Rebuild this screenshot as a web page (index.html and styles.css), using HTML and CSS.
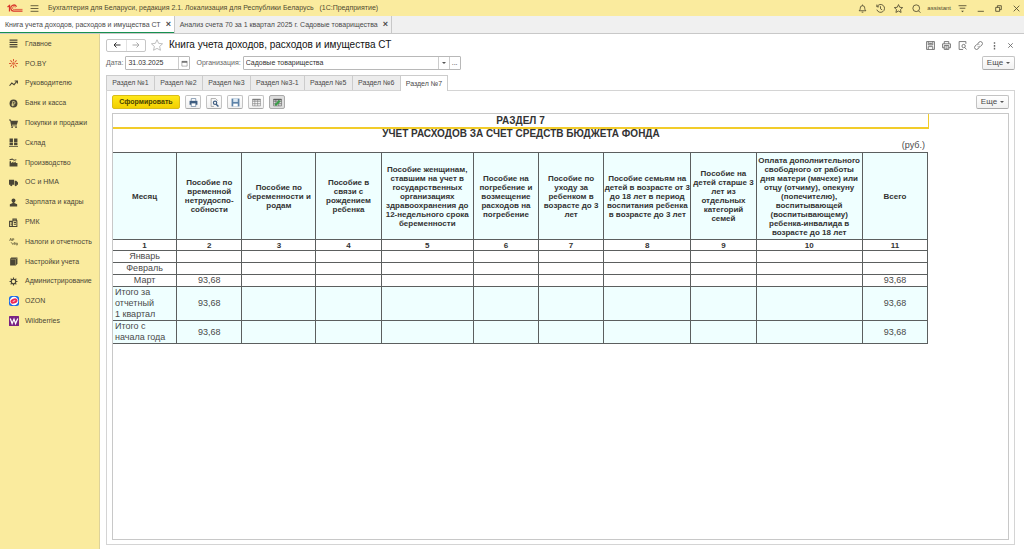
FILE: index.html
```html
<!DOCTYPE html>
<html lang="ru">
<head>
    <meta charset="utf-8">
    <title>Книга учета доходов, расходов и имущества СТ</title>
    <meta name="viewport" content="width=device-width, initial-scale=1.0">
    <link rel="stylesheet" href="styles.css">
</head>
<body>
    <header class="titlebar">
        <svg class="logo" viewBox="0 0 32 16" fill="none" stroke="#d9362b" stroke-width="2.500">
            <path d="M1 6 L5 3 V15"/>
            <path d="M19 5.500 A6 6 0 1 0 15 14 H31"/>
            <path d="M16.500 7 A2.800 2.800 0 1 0 15 10.800 H31" stroke-width="1.500"/>
        </svg>
        <button class="icon-btn menu-btn" aria-label="Меню">
            <svg viewBox="0 0 16 16"><path d="M1 3h14M1 8h14M1 13h14"/></svg>
        </button>
        <span class="app-title">Бухгалтерия для Беларуси, редакция 2.1. Локализация для Республики Беларусь &nbsp; (1С:Предприятие)</span>
        <div class="title-tools">
            <button class="icon-btn" aria-label="Уведомления"><svg viewBox="0 0 16 16"><path d="M2 12h12c-2-2-2-3-2-5a4 4 0 0 0-8 0c0 2 0 3-2 5zM8 1v2M6.500 14.500h3"/></svg></button>
            <button class="icon-btn" aria-label="История"><svg viewBox="0 0 16 16"><path d="M2 4.500A7 7 0 1 1 1.500 10M1.500 1v4h4M8 4v4.500l3 2"/></svg></button>
            <button class="icon-btn" aria-label="Избранное"><svg viewBox="0 0 16 16"><path d="M8 1l2.200 4.800 5.200.6-3.900 3.500 1.100 5.100L8 12.500 3.400 15l1.100-5.100L.6 6.400l5.200-.6z"/></svg></button>
            <button class="icon-btn" aria-label="Поиск"><svg viewBox="0 0 16 16"><circle cx="7.500" cy="7.500" r="6"/><path d="M11.500 12l3.500 3.500"/></svg></button>
            <span class="user">assistant</span>
            <button class="icon-btn" aria-label="Настройки"><svg viewBox="0 0 16 16"><path d="M1 3h14M3 7.500h10"/><path d="M5.500 12h5L8 14.500z" fill="#4f4a30" stroke="none"/></svg></button>
            <button class="icon-btn" aria-label="Свернуть"><svg viewBox="0 0 16 16"><path d="M3 13h11"/></svg></button>
            <button class="icon-btn" aria-label="Развернуть"><svg viewBox="0 0 16 16"><path d="M3 6h7v7H3zM6 6V3h7v7h-3"/></svg></button>
            <button class="icon-btn" aria-label="Закрыть"><svg viewBox="0 0 16 16"><path d="M3 3l10 10M13 3L3 13"/></svg></button>
        </div>
    </header>

    <nav class="windows">
        <div class="window-tab active"><a href="#">Книга учета доходов, расходов и имущества СТ</a><button class="tab-close" aria-label="Закрыть">×</button></div>
        <div class="window-tab"><a href="#">Анализ счета 70 за 1 квартал 2025 г. Садовые товарищества</a><button class="tab-close" aria-label="Закрыть">×</button></div>
    </nav>

    <div class="workspace">
        <nav class="sidebar">
            <div class="menu">
                <a href="#"><svg viewBox="0 0 16 16" stroke="#4a4636" stroke-width="2"><path d="M1 2h14M1 6h14M1 10h14M1 14h14"/></svg>Главное</a>
                <a href="#"><svg viewBox="0 0 16 16" fill="none" stroke="#dc5a32" stroke-width="1.800"><path d="M8 0v4M8 12v4M0 8h4M12 8h4M2.500 2.500l3 3M10.500 10.500l3 3M13.500 2.500l-3 3M5.500 10.500l-3 3"/><circle cx="8" cy="8" r="1.500"/></svg>PO.BY</a>
                <a href="#"><svg viewBox="0 0 16 16" fill="none" stroke="#4a4636" stroke-width="2"><path d="M1 12l4-5 4 3 5-6M10 3.500h5V8"/></svg>Руководителю</a>
                <a href="#"><svg viewBox="0 0 16 16"><circle cx="8" cy="8" r="7" fill="#4a4636"/><path d="M6.500 13V4.500h2a2.300 2.300 0 0 1 0 4.600H4.500M4.500 11h5" fill="none" stroke="#faeb9e" stroke-width="1.300"/></svg>Банк и касса</a>
                <a href="#"><svg viewBox="0 0 16 16" fill="#4a4636"><path d="M0 1h3l1 2h12l-2 7H5l.5 1.500H14V13H4L2 2.500H0z"/><circle cx="5.500" cy="14.500" r="1.500"/><circle cx="12.500" cy="14.500" r="1.500"/></svg>Покупки и продажи</a>
                <a href="#"><svg viewBox="0 0 16 16" fill="#4a4636"><path d="M1 1h6v6H1zM9 1h6v6H9zM1 8h6v5H1zM9 8h6v5H9zM0 14h16v1.500H0z"/></svg>Склад</a>
                <a href="#"><svg viewBox="0 0 16 16" fill="#4a4636"><path d="M1 15V6l2-1 1 4 4-3v3l4-3v3h3v6zM1 2l5-1 3 2 4-1v2l-4 1-3-2-5 1z"/></svg>Производство</a>
                <a href="#"><svg viewBox="0 0 16 16" fill="#4a4636"><path d="M0 3h9v9H0zM10 5h3l3 3v4h-6z"/><circle cx="4" cy="12.500" r="2"/><circle cx="12" cy="12.500" r="2"/></svg>ОС и НМА</a>
                <a href="#"><svg viewBox="0 0 16 16" fill="#4a4636"><circle cx="8" cy="4.500" r="3.500"/><path d="M6.500 7h3v2l5 2v4h-13v-4l5-2z"/></svg>Зарплата и кадры</a>
                <a href="#"><svg viewBox="0 0 16 16" fill="none" stroke="#4a4636" stroke-width="1.800"><path d="M1 6h5v9H1zM6 15h8V5H6M7 5V2h6v3M3 9h2M3 12h2M8.500 8h4M8.500 11h4"/></svg>РМК</a>
                <a href="#"><svg viewBox="0 0 16 16" fill="none" stroke="#6b6440" stroke-width="1.300"><path d="M1 7l2-5 2 5M2 5h2M6 7V3h2.500v2H6M4 9c0 2 1 3 3 3M6 10.500l1.500 1.500L6 13.500M9 14v-4h2v2.500H9M12.500 14h2.500v-3h-2.500z"/></svg>Налоги и отчетность</a>
                <a href="#"><svg viewBox="0 0 16 16" fill="#4a4636"><path d="M4 1h11v11l-3 3H2V3z"/><path d="M3 4h8.500v10M11.500 4L14 2" fill="none" stroke="#b3a871"/></svg>Настройки учета</a>
                <a href="#"><svg viewBox="0 0 16 16" fill="none" stroke="#4a4636"><circle cx="8" cy="8" r="4" stroke-width="2"/><path d="M8 1v3M8 12v3M1 8h3M12 8h3M3 3l2 2M11 11l2 2M13 3l-2 2M5 11l-2 2" stroke-width="2"/></svg>Администрирование</a>
                <a href="#"><svg class="brand" viewBox="0 0 16 16"><rect width="16" height="16" rx="4" fill="#1766e8"/><circle cx="8" cy="8" r="6.800" fill="#fff"/><ellipse cx="8" cy="8" rx="5.800" ry="4" fill="#ed2855" transform="rotate(-20 8 8)"/><path d="M6 8.800l4-1.600" stroke="#fff" stroke-width="1.300"/></svg>OZON</a>
                <a href="#"><svg class="brand" viewBox="0 0 16 16"><rect width="16" height="16" rx="1" fill="#792383"/><path d="M2 4l3 8 3-7 2.500 7L14 4" fill="none" stroke="#fff" stroke-width="2"/></svg>Wildberries</a>
            </div>
        </nav>

        <main class="document">
            <div class="doc-head">
                <div class="history">
                    <button aria-label="Назад"><svg viewBox="0 0 16 16"><path d="M15 8H2M7 3L2 8l5 5"/></svg></button>
                    <button class="muted" aria-label="Вперед"><svg viewBox="0 0 16 16"><path d="M1 8h13M9 3l5 5-5 5"/></svg></button>
                </div>
                <svg class="fav" viewBox="0 0 16 16"><path d="M8 1l2.200 4.800 5.200.6-3.900 3.500 1.100 5.100L8 12.500 3.400 15l1.100-5.100L.6 6.400l5.200-.6z"/></svg>
                <h1>Книга учета доходов, расходов и имущества СТ</h1>
                <div class="doc-tools">
                    <button class="icon-btn" aria-label="Сохранить"><svg viewBox="0 0 16 16"><path d="M1 1h14v14H1zM4 1v6h8V1M4 15v-5h8v5M6 3v3M8 3v3M10 3v3"/></svg></button>
                    <button class="icon-btn" aria-label="Печать"><svg viewBox="0 0 16 16"><path d="M4 5V1h8v4M4 12H1V5h14v7h-3M4 8h8v7H4zM6 10.500h4M6 13h4"/></svg></button>
                    <button class="icon-btn" aria-label="Просмотр"><svg viewBox="0 0 16 16"><path d="M14 5V1H2v14h7"/><circle cx="10" cy="9" r="3"/><path d="M12 11.500l3 3.500"/></svg></button>
                    <button class="icon-btn" aria-label="Ссылка"><svg viewBox="0 0 16 16"><path d="M7 4l2-2a3.200 3.200 0 0 1 5 5l-3 3a3 3 0 0 1-4.500-.5M9 12l-2 2a3.200 3.200 0 0 1-5-5l3-3a3 3 0 0 1 4.500.5"/></svg></button>
                    <button class="icon-btn" aria-label="Дополнительно"><svg viewBox="0 0 16 16"><path d="M8 2v3M8 7v3M8 12v3" stroke-width="2.500"/></svg></button>
                    <button class="icon-btn" aria-label="Закрыть форму"><svg viewBox="0 0 16 16"><path d="M4 4l8 8M12 4l-8 8"/></svg></button>
                </div>
            </div>

            <div class="params">
                <label for="date">Дата:</label>
                <div class="field date-field">
                    <input id="date" type="text" value="31.03.2025">
                    <button aria-label="Календарь"><svg viewBox="0 0 16 16"><path d="M2 3h12v11H2z"/><path d="M2 4.500h12" stroke-width="3"/></svg></button>
                </div>
                <label for="org">Организация:</label>
                <div class="field org-field">
                    <select id="org"><option>Садовые товарищества</option></select>
                    <span class="drop"></span>
                    <button aria-label="Выбрать">...</button>
                </div>
                <button class="btn more">Еще <span class="caret"></span></button>
            </div>

            <div class="tabs">
                <button>Раздел №1</button>
                <button>Раздел №2</button>
                <button>Раздел №3</button>
                <button>Раздел №3-1</button>
                <button>Раздел №5</button>
                <button>Раздел №6</button>
                <button class="active">Раздел №7</button>
            </div>

            <section class="panel">
                <div class="toolbar">
                    <button class="btn primary">Сформировать</button>
                    <button class="btn tool" aria-label="Печать"><svg viewBox="0 0 16 16"><path d="M4 5V1h8v4" fill="#fff" stroke="#3d5c80"/><path d="M1 5h14v7H1z" fill="#3d5c80"/><path d="M4 9h8v6H4z" fill="#fff" stroke="#3d5c80"/></svg></button>
                    <button class="btn tool" aria-label="Предварительный просмотр"><svg viewBox="0 0 16 16" fill="none" stroke="#3d5c80"><path d="M13 5V4l-3-3H2v14h5" stroke="#777"/><circle cx="9" cy="8.500" r="3" stroke-width="2"/><path d="M11 11l4 4" stroke-width="2.500"/></svg></button>
                    <button class="btn tool" aria-label="Сохранить"><svg viewBox="0 0 16 16"><path d="M1 1h14v14H1z" fill="#5c82a8"/><path d="M4 1h8v6H4z" fill="#dce8f2"/><path d="M4 10h8v5H4z" fill="#fff"/></svg></button>
                    <button class="btn tool" aria-label="Таблица"><svg viewBox="0 0 16 16" fill="none" stroke="#777"><path d="M1 2h14v12H1zM1 6h14M1 10h14M5 2v12M10 2v12"/><path d="M1 3h14" stroke-width="2"/></svg></button>
                    <button class="btn tool pressed" aria-label="Редактирование"><svg viewBox="0 0 16 16" fill="none" stroke="#555"><path d="M1 2h14v12H1zM1 6h14M1 10h14M5 2v12M10 2v12"/><path d="M1 3h14" stroke-width="2"/><path d="M4 13l8-8" stroke="#3c9e4b" stroke-width="4"/></svg></button>
                    <button class="btn more">Еще <span class="caret"></span></button>
                </div>

                <div class="sheet">
                    <div class="report">
                        <h2 class="selected">РАЗДЕЛ 7</h2>
                        <h2>УЧЕТ РАСХОДОВ ЗА СЧЕТ СРЕДСТВ БЮДЖЕТА ФОНДА</h2>
                        <p class="units">(руб.)</p>
                        <table>
                            <colgroup>
                                <col class="c-month"><col class="c-std"><col class="c-birth"><col class="c-std"><col class="c-women"><col class="c-std">
                                <col class="c-std"><col class="c-family"><col class="c-std"><col class="c-extra"><col class="c-std">
                            </colgroup>
                            <thead>
                                <tr class="names">
                                    <th>Месяц</th>
                                    <th>Пособие по<br>временной<br>нетрудоспо-<br>собности</th>
                                    <th>Пособие по<br>беременности и<br>родам</th>
                                    <th>Пособие в<br>связи с<br>рождением<br>ребенка</th>
                                    <th>Пособие женщинам,<br>ставшим на учет в<br>государственных<br>организациях<br>здравоохранения до<br>12-недельного срока<br>беременности</th>
                                    <th>Пособие на<br>погребение и<br>возмещение<br>расходов на<br>погребение</th>
                                    <th>Пособие по<br>уходу за<br>ребенком в<br>возрасте до 3<br>лет</th>
                                    <th>Пособие семьям на<br>детей в возрасте от 3<br>до 18 лет в период<br>воспитания ребенка<br>в возрасте до 3 лет</th>
                                    <th>Пособие на<br>детей старше 3<br>лет из<br>отдельных<br>категорий<br>семей</th>
                                    <th>Оплата дополнительного<br>свободного от работы<br>дня матери (мачехе) или<br>отцу (отчиму), опекуну<br>(попечителю),<br>воспитывающей<br>(воспитывающему)<br>ребенка-инвалида в<br>возрасте до 18 лет</th>
                                    <th>Всего</th>
                                </tr>
                                <tr class="numbers">
                                    <th>1</th><th>2</th><th>3</th><th>4</th><th>5</th><th>6</th><th>7</th><th>8</th><th>9</th><th>10</th><th>11</th>
                                </tr>
                            </thead>
                            <tbody>
                                <tr><td>Январь</td><td></td><td></td><td></td><td></td><td></td><td></td><td></td><td></td><td></td><td></td></tr>
                                <tr><td>Февраль</td><td></td><td></td><td></td><td></td><td></td><td></td><td></td><td></td><td></td><td></td></tr>
                                <tr><td>Март</td><td>93,68</td><td></td><td></td><td></td><td></td><td></td><td></td><td></td><td></td><td>93,68</td></tr>
                                <tr class="total"><td>Итого за<br>отчетный<br>1 квартал</td><td>93,68</td><td></td><td></td><td></td><td></td><td></td><td></td><td></td><td></td><td>93,68</td></tr>
                                <tr class="total"><td>Итого с<br>начала года</td><td>93,68</td><td></td><td></td><td></td><td></td><td></td><td></td><td></td><td></td><td>93,68</td></tr>
                            </tbody>
                        </table>
                    </div>
                </div>
            </section>
        </main>
    </div>
</body>
</html>
```
FILE: styles.css
```css
* { box-sizing: border-box; }
body { margin: 0; height: 100vh; display: flex; flex-direction: column; background: #fff; color: #4a4a4a;
       font: 7px/10px "Liberation Sans", Arial, sans-serif; }
button, input, select { font: inherit; color: inherit; margin: 0; padding: 0; border: none; background: none; }
a { color: inherit; text-decoration: none; }
svg { display: block; flex: none; }

/* top bar */
.titlebar { display: flex; align-items: center; height: 16px; padding: 0 3px 0 7px; background: #faeb9e; flex: none; }
.logo { width: 16px; height: 8px; }
.icon-btn { display: flex; align-items: center; justify-content: center; width: 10px; height: 10px; }
.icon-btn svg { width: 9px; height: 9px; fill: none; stroke: #4f4a30; stroke-width: 1.5; }
.menu-btn { margin: 0 9px 0 6px; }
.app-title { color: #4f4a30; white-space: nowrap; }
.title-tools { display: flex; align-items: center; gap: 8px; margin-left: auto; color: #4f4a30; }
.user { font-size: 6px; margin: 0 -2px; }

/* open windows */
.windows { display: flex; height: 18px; background: #f0f0f0; border-bottom: 1px solid #c8c8c8; flex: none; }
.window-tab { display: flex; align-items: center; gap: 5px; padding: 0 3px 0 5px; border-right: 1px solid #c8c8c8; white-space: nowrap; }
.window-tab.active { background: #fff; box-shadow: inset 0 -1px #169150; }
.tab-close { width: 5px; font-size: 9px; font-weight: bold; line-height: 9px; }

.workspace { display: flex; flex: 1; min-height: 0; }

.sidebar { width: 100px; flex: none; background: #faeb9e; border-right: 1px solid #ddd29a; color: #4a4636; }
.menu { display: flex; flex-direction: column; height: 297px; }
.menu a { display: flex; flex: 1; align-items: center; gap: 7px; padding-left: 9px; white-space: nowrap; }
.menu svg { width: 9px; height: 9px; }
.menu .brand { width: 10px; height: 10px; margin-right: -1px; }

.document { flex: 1; min-width: 0; display: flex; flex-direction: column; padding: 4px 9px 4px 6px; }

.doc-head { display: flex; align-items: center; height: 14px; }
.history { display: flex; border: 1px solid #c6c6c6; border-radius: 2px; }
.history button { width: 19px; height: 11px; display: flex; align-items: center; justify-content: center; }
.history button + button { border-left: 1px solid #e2e2e2; }
.history svg { width: 8px; height: 8px; fill: none; stroke: #333; stroke-width: 2; }
.history .muted svg { stroke: #aaa; }
.fav { width: 12px; height: 12px; margin: 0 6px 0 5px; fill: none; stroke: #aaa; }
h1 { margin: 0; font-size: 10px; font-weight: normal; line-height: 12px; color: #111; white-space: nowrap; }
.doc-tools { display: flex; gap: 6px; margin-left: auto; }
.doc-tools svg { stroke: #666; }

.params { display: flex; align-items: center; height: 14px; margin: 4px 0 5px; }
.params label { color: #666; margin-right: 2px; }
.field { display: flex; height: 14px; border: 1px solid #b8b8b8; border-radius: 1px; background: #fff; margin-right: 6px; color: #333; }
.field input, .field select { flex: 1; min-width: 0; padding-left: 2px; appearance: none; }
.field button, .drop { width: 11px; display: flex; align-items: center; justify-content: center; border-left: 1px solid #ccc; }
.field svg { width: 7px; height: 7px; fill: none; stroke: #555; }
.date-field { width: 65px; }
.org-field { width: 218px; }
.drop { pointer-events: none; }
.drop::after, .caret { content: ""; border: 2px solid transparent; border-top-color: #555; border-bottom: none; }

.btn { height: 14px; border: 1px solid #c3c3c3; border-bottom-color: #aaa; border-radius: 2px; background: linear-gradient(#fff, #f1f1f1);
       display: flex; align-items: center; justify-content: center; }
.more { width: 33px; gap: 3px; margin-left: auto; font-size: 8px; }

.tabs { display: flex; }
.tabs button { min-width: 48px; height: 15px; padding: 0 5px; background: #ececec; border: 1px solid #ccc; border-right: none; border-bottom: none; white-space: nowrap; }
.tabs .active { background: #fff; border-right: 1px solid #ccc; height: 16px; margin-bottom: -1px; z-index: 1; }

.panel { flex: 1; min-height: 0; display: flex; flex-direction: column; border: 1px solid #d4d4d4; padding: 4px 5px; }
.toolbar { display: flex; gap: 5px; margin-bottom: 4px; }
.primary { width: 68px; background: linear-gradient(#ffe81a, #f2cf00); border-color: #d9bd1a; color: #4a4200; font-weight: bold; }
.tool { width: 16px; }
.tool svg { width: 9px; height: 9px; }
.tool.pressed { background: #dedede; border-color: #aaa; }

/* spreadsheet */
.sheet { flex: 1; min-height: 0; overflow: hidden; border: 1px solid #c8c8c8; }
.report { width: 816px; }
h2 { margin: 0; font-size: 10px; line-height: 10px; text-align: center; color: #333; }
.selected { height: 15px; line-height: 13px; border: solid #f2cc2a; border-width: 0 1px 2px 0; }
.units { margin: 0; padding: 1px 4px 2px 0; font-size: 9px; line-height: 10px; text-align: right; }
table { width: 816px; margin-left: -1px; table-layout: fixed; border-collapse: collapse; font-size: 9px; line-height: 11px; }
th, td { padding: 0; border: 1px solid #5c5f5f; text-align: center; vertical-align: middle; }
tr > :first-child { border-left-color: #c8c8c8; }
th { font-size: 8px; line-height: 9px; color: #333; white-space: nowrap; }
.names th { height: 87px; }
.numbers th { height: 11px; }
.names th, .total td { background: #efffff; }
td { height: 12px; }
.total td:first-child { text-align: left; padding-left: 2px; }
.c-month { width: 64px; }
.c-std { width: 65px; }
.c-birth { width: 74px; }
.c-women { width: 92px; }
.c-family { width: 87px; }
.c-extra { width: 106px; }
```
